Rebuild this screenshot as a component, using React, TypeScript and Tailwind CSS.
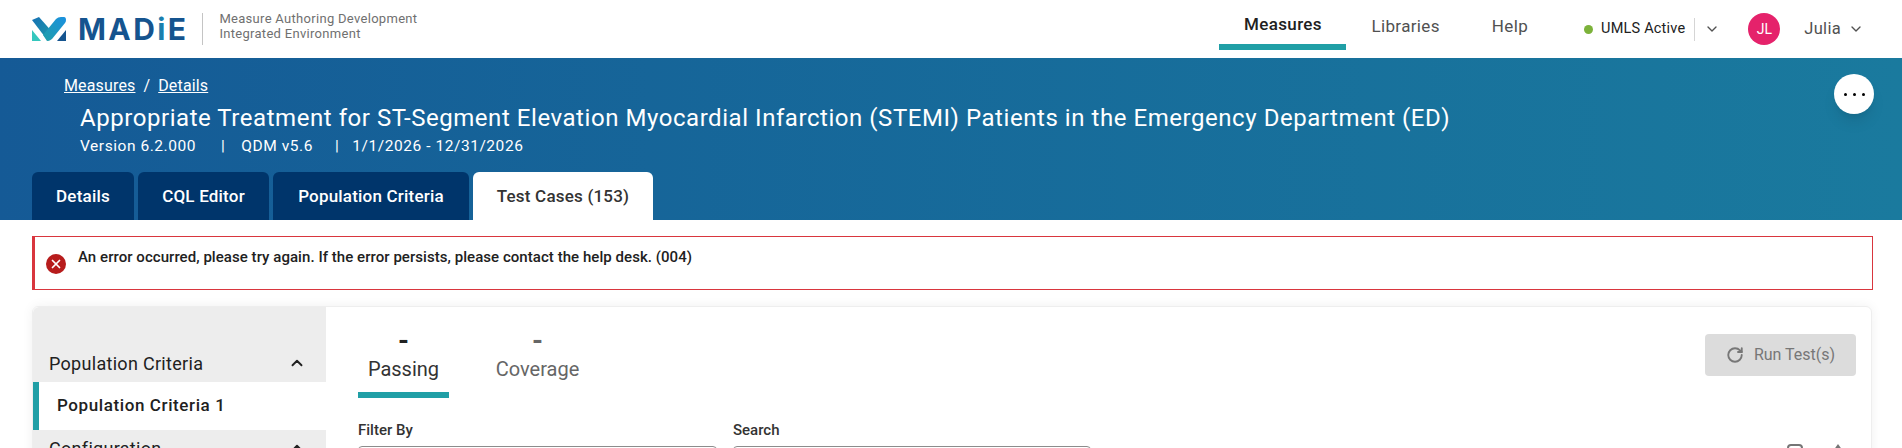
import { ChevronDown, ChevronUp, RotateCw, X } from 'lucide-react';

function Logo() {
  return (
    <svg width="34" height="24" viewBox="0 0 34 24" className="shrink-0">
      <defs>
        <linearGradient id="logoLeft" x1="0" y1="0" x2="1" y2="1">
          <stop offset="0" stopColor="#1670b5" />
          <stop offset="1" stopColor="#1f9fa8" />
        </linearGradient>
        <linearGradient id="logoRight" x1="0" y1="1" x2="1" y2="0">
          <stop offset="0" stopColor="#1f9fa8" />
          <stop offset="1" stopColor="#1a90e0" />
        </linearGradient>
      </defs>
      <path d="M0 3 L7 0 L22 17 L16 24 Z" fill="url(#logoLeft)" />
      <path d="M11 18 L24 2 Q26 0 29 0 L32 0 Q34 0 34 3 Q34 5 33 6 L20 22 Q18 24 15 24 Z" fill="url(#logoRight)" />
      <path d="M0 13 L9 24 L0 24 Z" fill="#35c7bd" />
      <path d="M34 13 L34 24 L25 24 Z" fill="#15548f" />
    </svg>
  );
}

export default function App() {
  return (
    <div className="w-[1902px] h-[448px] overflow-hidden bg-white font-['Roboto',sans-serif] text-[#212121]">
      {/* Top nav */}
      <div className="flex h-[58px] items-center pl-8 pr-[38px]">
        <Logo />
        <span className="ml-[12px] font-['Inter',sans-serif] text-[30px] font-bold leading-none tracking-[2.4px] text-[#15548f]">
          MAD<span className="text-[#1a7fae]">i</span>E
        </span>
        <div className="ml-[14px] h-8 w-px bg-[#c4c4c4]" />
        <div className="ml-4 pb-[6px] text-[13px] leading-[15px] tracking-[0.3px] text-[#707070]">
          <div>Measure Authoring Development</div>
          <div>Integrated Environment</div>
        </div>

        <div className="ml-auto flex h-full items-stretch text-[17px] tracking-[0.35px]">
          <div className="mt-2 mb-2 flex w-[127px] items-center justify-center border-b-[6px] border-[#209fa6] pb-[2px] font-medium">
            Measures
          </div>
          <div className="ml-[25px] flex items-center pb-[4px] text-[#515151]">Libraries</div>
          <div className="ml-[52px] flex items-center pb-[4px] text-[#515151]">Help</div>
        </div>

        <div className="ml-[56px] flex items-center text-[14.5px]">
          <span className="h-[9px] w-[9px] rounded-full bg-[#7cb23a]" />
          <span className="ml-2 tracking-[0.2px]">UMLS Active</span>
          <span className="ml-[9px] h-[23px] w-px bg-[#d5d5d5]" />
          <ChevronDown className="ml-[9px] h-4 w-4 text-[#515151]" />
        </div>
        <div className="ml-[28px] flex h-8 w-8 items-center justify-center rounded-full bg-[#e5226b] text-[14px] text-white">
          JL
        </div>
        <span className="ml-[24px] text-[16.5px] tracking-[0.3px] text-[#515151]">Julia</span>
        <ChevronDown className="ml-[7px] h-4 w-4 text-[#515151]" />
      </div>

      {/* Measure banner */}
      <div className="relative h-[162px] bg-gradient-to-r from-[#155a96] to-[#1a7a9e] text-white">
        <div className="pl-16 pt-[18px] text-[16px] leading-[20px] tracking-[0.15px]">
          <span className="underline">Measures</span>
          <span className="mx-[8px]">/</span>
          <span className="underline">Details</span>
        </div>
        <h1 className="mt-[8px] pl-20 text-[24px] font-normal leading-[28px] tracking-[0.55px]">
          Appropriate Treatment for ST-Segment Elevation Myocardial Infarction (STEMI) Patients in the Emergency Department (ED)
        </h1>
        <div className="mt-[4px] flex pl-20 text-[15.5px] leading-[20px] tracking-[0.55px]">
          <span>Version 6.2.000</span>
          <span className="ml-[25px]">|</span>
          <span className="ml-[16px]">QDM v5.6</span>
          <span className="ml-[22px]">|</span>
          <span className="ml-[13px]">1/1/2026 - 12/31/2026</span>
        </div>
        <button className="absolute right-[28px] top-4 flex h-10 w-10 items-center justify-center gap-[6px] rounded-full bg-white shadow-lg">
          <span className="h-[3px] w-[3px] rounded-full bg-black" />
          <span className="h-[3px] w-[3px] rounded-full bg-black" />
          <span className="h-[3px] w-[3px] rounded-full bg-black" />
        </button>
        <div className="absolute bottom-0 left-8 flex gap-1 text-[17px] font-medium tracking-[0.2px]">
          <div className="flex h-12 w-[102px] items-center justify-center rounded-t-md bg-[#00356b] pt-px">Details</div>
          <div className="flex h-12 w-[131px] items-center justify-center rounded-t-md bg-[#00356b] pt-px">CQL Editor</div>
          <div className="flex h-12 w-[196px] items-center justify-center rounded-t-md bg-[#00356b] pt-px">Population Criteria</div>
          <div className="flex h-12 w-[180px] items-center justify-center rounded-t-md bg-white pt-px text-[#333]">Test Cases (153)</div>
        </div>
      </div>

      {/* Error alert */}
      <div className="mx-8 mt-4 flex h-[54px] w-[1841px] border border-l-[3px] border-[#d9363e] pl-[11px] pt-[17px]">
        <span className="flex h-5 w-5 items-center justify-center rounded-full bg-[#b71c1c]">
          <X className="h-[14px] w-[14px] text-white" strokeWidth={3} />
        </span>
        <span className="ml-3 mt-[-7px] text-[15px] font-medium leading-[20px] tracking-[0.05px]">
          An error occurred, please try again. If the error persists, please contact the help desk. (004)
        </span>
      </div>

      {/* Test case card */}
      <div className="mx-8 mt-4 flex h-[200px] w-[1840px] rounded-t-md border border-[#eeeeee] shadow-[0_0_12px_rgba(0,0,0,0.06)]">
        <div className="w-[293px] shrink-0 rounded-tl-md bg-[#ededed] pt-[37px]">
          <div className="flex h-[38px] items-center justify-between pl-4 pr-[20px] text-[18px] tracking-[0.3px]">
            Population Criteria
            <ChevronUp className="h-[18px] w-[18px]" strokeWidth={2.5} />
          </div>
          <div className="flex h-12 items-center border-l-[6px] border-[#209fa6] bg-white pl-[18px] text-[17px] font-medium tracking-[0.6px]">
            Population Criteria 1
          </div>
          <div className="flex h-[36px] items-center justify-between pl-4 pr-[20px] text-[18px] tracking-[0.3px]">
            Configuration
            <ChevronUp className="h-[18px] w-[18px]" strokeWidth={2.5} />
          </div>
        </div>

        <div className="flex-1 pl-8 pr-[15px]">
          <div className="flex items-start justify-between">
            <div className="flex pt-[24px]">
              <div className="flex h-[67px] w-[91px] flex-col items-center border-b-[6px] border-[#209fa6]">
                <span className="text-[28px] font-bold leading-[20px]">-</span>
                <span className="mt-[6px] text-[20px] leading-[24px] text-[#333]">Passing</span>
              </div>
              <div className="ml-[21px] flex h-[67px] w-[135px] flex-col items-center text-[#666]">
                <span className="text-[28px] font-bold leading-[20px]">-</span>
                <span className="mt-[6px] text-[20px] leading-[24px]">Coverage</span>
              </div>
            </div>
            <button className="mt-[27px] flex h-[42px] w-[151px] items-center justify-center gap-[10px] rounded bg-[#dcdcdc] text-[16px] text-[#777]">
              <RotateCw className="h-[18px] w-[18px]" strokeWidth={2.5} />
              Run Test(s)
            </button>
          </div>

          <div className="mt-[22px] flex items-start">
            <div className="w-[359px]">
              <div className="text-[15px] font-medium leading-[20px] text-[#333]">Filter By</div>
              <div className="mt-[6px] h-10 rounded-t border border-[#8c8c8c]" />
            </div>
            <div className="ml-4 w-[358px]">
              <div className="text-[15px] font-medium leading-[20px] text-[#333]">Search</div>
              <div className="mt-[6px] h-10 rounded-t border border-[#8c8c8c]" />
            </div>
            <div className="ml-auto mr-[12px] mt-[24px] flex items-start">
              <div className="h-4 w-4 rounded-sm border-2 border-[#757575]" />
              <svg width="12" height="8" viewBox="0 0 12 8" className="ml-[29px]">
                <path d="M6 0 L11 7 L1 7 Z" fill="#757575" />
              </svg>
            </div>
          </div>
        </div>
      </div>
    </div>
  );
}
